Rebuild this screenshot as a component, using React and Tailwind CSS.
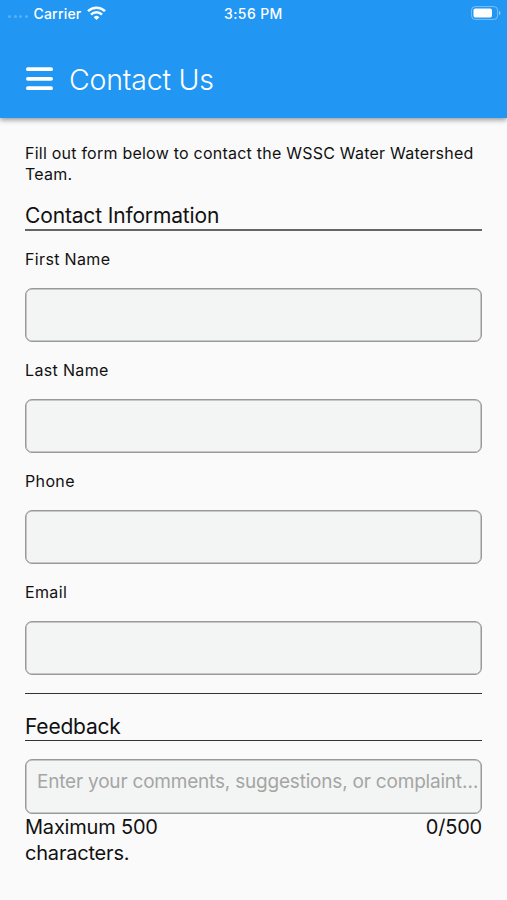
import React from "react";

const FIELDS = ["First Name", "Last Name", "Phone", "Email"];

const BOX =
  "block w-full rounded-[7px] border border-[#999] bg-[#f3f5f4] shadow-[inset_0_0_0_0.5px_#999]";

const StatusBar = () => (
  <div className="relative h-[26px] flex items-center justify-between pl-[8px] pr-[5px] text-white text-[14px] font-medium">
    <div className="flex items-center">
      <div className="flex gap-[2.5px] mt-[7px] mr-[6px]">
        {[0, 1, 2, 3].map((i) => (
          <span key={i} className="w-[3px] h-[3px] rounded-full bg-white/25" />
        ))}
      </div>
      <span className="tracking-[0.2px]">Carrier</span>
      <svg className="ml-[6px]" width="19" height="14" viewBox="0 0 19 14" fill="none" stroke="#fff" strokeWidth="2.5">
        <path d="M1 5.2a12.2 12.2 0 0 1 17 0" />
        <path d="M4 8.6a7.8 7.8 0 0 1 11 0" />
        <path d="M9.5 14 6.7 11.2a4 4 0 0 1 5.6 0z" fill="#fff" stroke="none" />
      </svg>
    </div>
    <span className="absolute left-[224px] tracking-[0.4px]">3:56 PM</span>
    <svg width="31" height="14" viewBox="0 0 31 14">
      <rect x="0.6" y="0.6" width="26" height="12.8" rx="3.5" fill="none" stroke="#fff" strokeOpacity="0.4" />
      <rect x="2.5" y="2.5" width="18.5" height="9" rx="1.8" fill="#fff" />
      <path d="M28 4.8c2 .8 2 3.6 0 4.4z" fill="#fff" fillOpacity="0.5" />
    </svg>
  </div>
);

const Field = ({ label }) => (
  <div className="h-[111px]">
    <label className="block h-5 leading-5 text-[16px] tracking-[0.35px]">{label}</label>
    <input className={`${BOX} mt-[19px] h-[54px]`} />
  </div>
);

const App = () => {
  return (
    <div className="w-full h-[900px] overflow-hidden bg-[#fafafa] text-[#111] font-['Inter',sans-serif]">
      {/* HEADER */}
      <header className="h-[118px] bg-[#2196f3] shadow-[0_2px_5px_rgba(0,0,0,0.4)]">
        <StatusBar />
        <div className="flex items-center h-[92px] pt-[14px] pl-[26px] text-white">
          <svg width="27" height="24" viewBox="0 0 27 24" stroke="#fff" strokeWidth="3.8" strokeLinecap="round">
            <path d="M1.9 2.2h23.2M1.9 11.8h23.2M1.9 21.2h23.2" />
          </svg>
          <h1 className="ml-4 mt-0.5 text-[28.5px] font-[350] tracking-[-0.2px]">Contact Us</h1>
        </div>
      </header>

      <main className="px-[25px] pt-[25px]">
        <p className="text-[16px] leading-[21px] tracking-[0.23px]">
          Fill out form below to contact the WSSC Water Watershed Team.
        </p>
        <h2 className="mt-[17px] h-[29px] leading-[28px] text-[21px] tracking-[-0.15px] border-b-2 border-[#666]">
          Contact Information
        </h2>
        <div className="mt-[18px]">
          {FIELDS.map((label) => (
            <Field key={label} label={label} />
          ))}
        </div>
        <h2 className="h-[48px] border-y border-[#333] text-[21px] tracking-[-0.2px] pt-[19px] leading-[28px]">
          Feedback
        </h2>
        <input
          placeholder="Enter your comments, suggestions, or complaint…"
          className={`${BOX} mt-[18px] h-[55px] pl-[11px] pb-[11px] text-[19px] tracking-[-0.2px] placeholder:text-[#a5a5a5]`}
        />
        <div className="flex justify-between text-[20px] leading-[26px] tracking-[-0.2px]">
          <p className="w-[150px]">Maximum 500 characters.</p>
          <p>0/500</p>
        </div>
      </main>
    </div>
  );
};

export default App;
